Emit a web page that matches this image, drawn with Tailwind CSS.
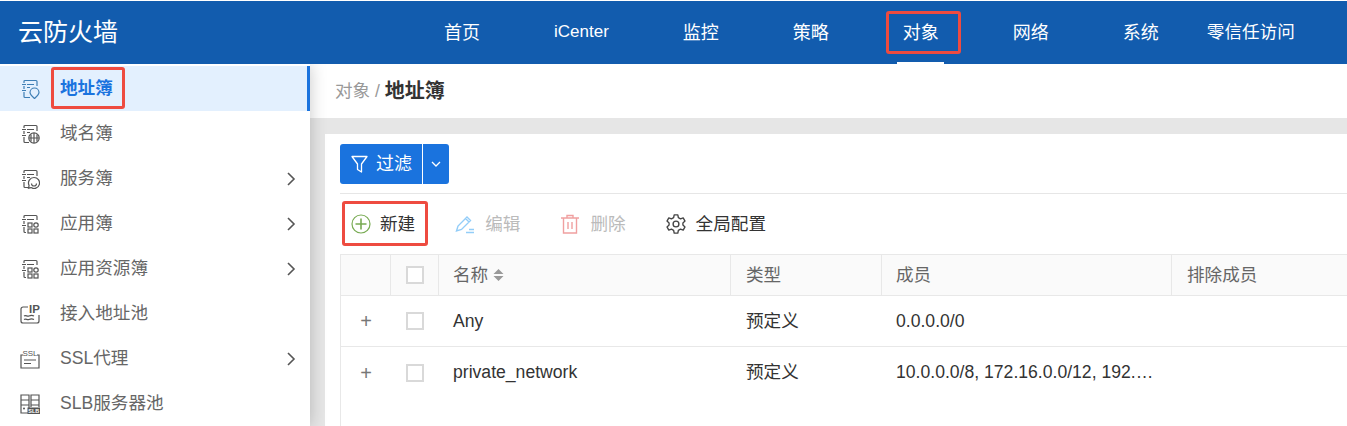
<!DOCTYPE html>
<html lang="zh">
<head>
    <meta charset="UTF-8">
    <title>云防火墙</title>
    <script src="https://cdn.jsdelivr.net/npm/@tailwindcss/browser@4"></script>
</head>
<body class="w-[1347px] h-[426px] overflow-hidden bg-white font-['Liberation_Sans','Noto_Sans_CJK_SC',sans-serif] text-[#333]">
    <!-- top bar -->
    <header class="relative z-20 mt-px h-[63px] bg-[#125cae] flex items-center text-white">
        <div class="w-[407px] pl-[18px] text-[25px] leading-none">云防火墙</div>
        <nav class="flex h-full text-lg">
            <a class="px-[37px] flex items-center">首页</a>
            <a class="px-[37px] flex items-center text-[17px]">iCenter</a>
            <a class="px-[37px] flex items-center">监控</a>
            <a class="px-[37px] flex items-center">策略</a>
            <a class="relative px-[37px] flex items-center">对象
                <span class="absolute left-[31px] bottom-0 w-[47px] h-[2px] bg-white"></span>
                <span class="absolute left-[20px] top-[10px] w-[75px] h-[43px] border-[3px] border-[#ee4b40] rounded-[3px]"></span>
            </a>
            <a class="px-[37px] flex items-center">网络</a>
            <a class="px-[37px] flex items-center">系统</a>
            <a class="px-[11px] flex items-center text-[17.6px]">零信任访问</a>
        </nav>
    </header>

    <div class="flex h-[362px]">
        <!-- sidebar -->
        <aside class="relative z-10 w-[310px] pt-[2px] shrink-0 text-[17.6px] text-[#666] bg-white shadow-[0_0_16px_rgba(0,0,0,0.22)]">
            <div class="relative h-[45px] flex items-center bg-[#e3f0fe] border-r-[3px] border-[#1a73de] text-[#1a73de] font-bold">
                <svg class="ml-[20px] w-5 h-5" viewBox="0 0 20 20" fill="none" stroke="#3f7fb5" stroke-width="1.200"><path d="M4 4V2.500a1 1 0 0 1 1-1h11a1 1 0 0 1 1 1V7M4 7v3M4 13v4.500a1 1 0 0 0 1 1h5M2 5.500h4M2 11.500h4M7 5.500h7M7 8.500h3"/><path d="M14.500 9a4.500 4.500 0 0 1 4.500 4.500c0 2-3 4.500-4.500 6-1.500-1.500-4.500-4-4.500-6A4.500 4.500 0 0 1 14.500 9z"/></svg>
                <span class="ml-[20px]">地址簿</span>
                <span class="absolute left-[51px] top-[1px] w-[74px] h-[42px] border-[3px] border-[#ee4b40] rounded-[3px]"></span>
            </div>
            <div class="h-[45px] flex items-center">
                <svg class="ml-[20px] w-5 h-5" viewBox="0 0 20 20" fill="none" stroke="#555" stroke-width="1.200"><path d="M4 4V2.500a1 1 0 0 1 1-1h11a1 1 0 0 1 1 1V7M4 7v3M4 13v4.500a1 1 0 0 0 1 1h4M2 5.500h4M2 11.500h4M7 5.500h7M7 8.500h3"/><circle cx="14" cy="14" r="5.200"/><path d="M9 14h10M14 9v10M11 10.500v7M17 10.500v7"/></svg>
                <span class="ml-[20px]">域名簿</span>
            </div>
            <div class="h-[45px] flex items-center">
                <svg class="ml-[20px] w-5 h-5" viewBox="0 0 20 20" fill="none" stroke="#555" stroke-width="1.200"><path d="M4 4V2.500a1 1 0 0 1 1-1h11a1 1 0 0 1 1 1V7M4 7v3M4 13v4.500a1 1 0 0 0 1 1h4M2 5.500h4M2 11.500h4M7 5.500h7M7 8.500h3"/><path d="M14 8.500a5.500 5.500 0 1 1-3 10.100l-2.500.6.600-2.700A5.500 5.500 0 0 1 14 8.500z"/><path d="M11.500 14.500a2.500 2.500 0 0 0 5 0"/></svg>
                <span class="ml-[20px]">服务簿</span>
                <svg class="ml-auto mr-[13px] w-3 h-3.5" viewBox="0 0 12 14" fill="none" stroke="#555" stroke-width="1.600"><path d="M3 1 9 7l-6 6"/></svg>
            </div>
            <div class="h-[45px] flex items-center">
                <svg class="ml-[20px] w-5 h-5" viewBox="0 0 20 20" fill="none" stroke="#555" stroke-width="1.200"><path d="M4 4V2.500a1 1 0 0 1 1-1h11a1 1 0 0 1 1 1V6M4 7v3M4 13v4.500a1 1 0 0 0 1 1h1M2 5.500h4M2 11.500h4M7 5.500h7"/><rect x="8" y="9" width="4" height="4"/><circle cx="16" cy="11" r="2.200"/><rect x="8" y="15" width="4" height="4"/><rect x="14" y="15" width="4" height="4"/></svg>
                <span class="ml-[20px]">应用簿</span>
                <svg class="ml-auto mr-[13px] w-3 h-3.5" viewBox="0 0 12 14" fill="none" stroke="#555" stroke-width="1.600"><path d="M3 1 9 7l-6 6"/></svg>
            </div>
            <div class="h-[45px] flex items-center">
                <svg class="ml-[20px] w-5 h-5" viewBox="0 0 20 20" fill="none" stroke="#555" stroke-width="1.200"><path d="M4 4V2.500a1 1 0 0 1 1-1h11a1 1 0 0 1 1 1V6M4 7v3M4 13v4.500a1 1 0 0 0 1 1h1M2 5.500h4M2 11.500h4M7 5.500h7"/><rect x="8" y="9" width="4" height="4"/><circle cx="16" cy="11" r="2.200"/><rect x="8" y="15" width="4" height="4"/><rect x="14" y="15" width="4" height="4"/></svg>
                <span class="ml-[20px]">应用资源簿</span>
                <svg class="ml-auto mr-[13px] w-3 h-3.5" viewBox="0 0 12 14" fill="none" stroke="#555" stroke-width="1.600"><path d="M3 1 9 7l-6 6"/></svg>
            </div>
            <div class="h-[45px] flex items-center">
                <svg class="ml-[20px] w-5 h-5" viewBox="0 0 20 20" fill="none" stroke="#555" stroke-width="1.200"><path d="M8 3H3a2 2 0 0 0-2 2v12a2 2 0 0 0 2 2h14a2 2 0 0 0 2-2v-6"/><path d="M4 12c2-1.500 3 1 5 0s3-1 5 0M4 15.500c2-1.500 3 1 5 0s3-1 5 0"/><text x="9" y="9" font-size="11.500" font-weight="700" fill="#555" stroke="none" font-family="Liberation Sans">IP</text></svg>
                <span class="ml-[20px]">接入地址池</span>
            </div>
            <div class="h-[45px] flex items-center">
                <svg class="ml-[20px] w-5 h-5" viewBox="0 0 20 20" fill="none" stroke="#555" stroke-width="1.200"><path d="M3 6H1v13h18V6h-2M4 11h12M4 14.500h7"/><text x="10" y="7" text-anchor="middle" font-size="8" fill="#555" stroke="none" font-family="Liberation Sans">SSL</text></svg>
                <span class="ml-[20px]">SSL代理</span>
                <svg class="ml-auto mr-[13px] w-3 h-3.5" viewBox="0 0 12 14" fill="none" stroke="#555" stroke-width="1.600"><path d="M3 1 9 7l-6 6"/></svg>
            </div>
            <div class="h-[45px] flex items-center">
                <svg class="ml-[20px] w-5 h-5" viewBox="0 0 20 20" fill="none" stroke="#555" stroke-width="1.200"><path d="M1 19V1h8v18H1zM1 6h8M1 11h8M11 13V1h8v12M11 6h8M11 11h8"/><circle cx="4" cy="14.500" r="1" fill="#555" stroke="none"/><rect x="7.500" y="13.500" width="12.500" height="6.500" fill="#555" stroke="none"/><text x="13.750" y="18.800" text-anchor="middle" font-size="5.500" font-weight="700" fill="#fff" stroke="none" font-family="Liberation Sans">SLB</text></svg>
                <span class="ml-[20px]">SLB服务器池</span>
            </div>
        </aside>

        <main class="flex-1 min-w-0 flex flex-col">
            <div class="h-[54px] shrink-0 pl-[25px] flex items-center text-[17.6px] text-[#999] bg-white">
                <span>对象 /&nbsp;</span><b class="font-bold text-[#333] text-[20px]">地址簿</b>
            </div>
            <div class="flex-1 flex flex-col bg-[#e6e6e6] pt-4 pl-[15px]">
                <div class="flex-1 bg-white pl-[15px] pt-[10px]">
                    <!-- filter -->
                    <div class="flex">
                        <button class="h-10 w-[82px] flex items-center bg-[#1a73de] rounded-l-[3px] text-white text-lg">
                            <svg class="ml-[11px] w-[17px] h-[18px]" viewBox="0 0 17 18" fill="none" stroke="white" stroke-width="1.300"><path d="M1 1.500h15l-5.500 7.500v8L6.500 14.500V9z" stroke-linejoin="round"/></svg>
                            <span class="ml-2">过滤</span>
                        </button>
                        <button class="ml-px h-10 w-[26px] flex items-center justify-center bg-[#1a73de] rounded-r-[3px]">
                            <svg class="w-3 h-2" viewBox="0 0 12 8" fill="none" stroke="white" stroke-width="1.300"><path d="M2 2l4 4 4-4"/></svg>
                        </button>
                    </div>
                    <div class="mt-[9px] border-t border-[#e6e6e6]"></div>
                    <!-- toolbar -->
                    <div class="relative h-[60px] flex items-center text-[17.6px]">
                        <svg class="ml-[11px] w-5 h-5" viewBox="0 0 20 20" fill="none" stroke="#78ab53"><circle cx="10" cy="10" r="9" stroke-width="1.200"/><path d="M10 4.500v11M4.500 10h11" stroke-width="1.600"/></svg>
                        <span class="ml-[9px]">新建</span>
                        <svg class="ml-[40px] w-[20px] h-5" viewBox="0 0 20 20" fill="none" stroke="#93cdf8" stroke-width="1.400"><path d="M1.500 17l1.500-5 9-9 3.500 3.500-9 9zM10.500 4.500 14 8M11 18.500h8M14 15.500h5"/></svg>
                        <span class="ml-[10px] text-[#bbb]">编辑</span>
                        <svg class="ml-[40px] w-5 h-5" viewBox="0 0 20 20" fill="none" stroke="#f0a0a0" stroke-width="1.400"><path d="M1 4h18M7 4V1.500h6V4M3.500 4v15h13V4M8 8v7M12 8v7"/></svg>
                        <span class="ml-[10px] text-[#bbb]">删除</span>
                        <svg class="ml-[40px] w-5 h-5" viewBox="1 1 22 22" fill="none" stroke="#444" stroke-width="1.500"><circle cx="12" cy="12" r="3.200"/><path d="M10 2h4l.6 3 2.400 1.300 2.900-1 2 3.500-2.300 2v2.400l2.300 2-2 3.500-2.900-1L14.600 19 14 22h-4l-.6-3L7 17.700l-2.900 1-2-3.500 2.300-2v-2.400l-2.300-2 2-3.500 2.900 1L9.400 5z" stroke-linejoin="round"/></svg>
                        <span class="ml-[10px]">全局配置</span>
                        <span class="absolute left-[2px] top-[7px] w-[86px] h-[45px] border-[3px] border-[#ee4b40] rounded-[3px]"></span>
                    </div>
                    <!-- table -->
                    <div class="text-[17.6px]">
                        <div class="h-[42px] flex items-center bg-[#fafafa] border border-r-0 border-[#e8e8e8] text-[#666]">
                            <div class="w-[50px] h-full border-r border-[#e8e8e8]"></div>
                            <div class="w-[48px] h-full border-r border-[#e8e8e8] flex items-center justify-center"><span class="w-[18px] h-[18px] bg-white border-2 border-[#d9d9d9]"></span></div>
                            <div class="w-[292px] h-full border-r border-[#e8e8e8] flex items-center pl-[14px]">名称
                                <svg class="ml-[5px] w-[11px] h-[14px]" viewBox="0 0 11 14" fill="#999"><path d="M5.500 1 10.500 6H.5zM5.500 13 .5 8h10z"/></svg>
                            </div>
                            <div class="w-[151px] h-full border-r border-[#e8e8e8] flex items-center pl-[15px]">类型</div>
                            <div class="w-[290px] h-full border-r border-[#e8e8e8] flex items-center pl-[14px]">成员</div>
                            <div class="flex-1 h-full flex items-center pl-[15px]">排除成员</div>
                        </div>
                        <div class="h-[51px] flex items-center border-l border-b border-[#e8e8e8]">
                            <div class="w-[50px] text-center text-[#777] text-xl">+</div>
                            <div class="w-[48px] flex justify-center"><span class="w-[18px] h-[18px] bg-white border-2 border-[#d9d9d9]"></span></div>
                            <div class="w-[292px] pl-[14px]">Any</div>
                            <div class="w-[151px] pl-[15px]">预定义</div>
                            <div class="w-[290px] pl-[14px]">0.0.0.0/0</div>
                        </div>
                        <div class="h-[51px] flex items-center border-l border-[#e8e8e8]">
                            <div class="w-[50px] text-center text-[#777] text-xl">+</div>
                            <div class="w-[48px] flex justify-center"><span class="w-[18px] h-[18px] bg-white border-2 border-[#d9d9d9]"></span></div>
                            <div class="w-[292px] pl-[14px]">private_network</div>
                            <div class="w-[151px] pl-[15px]">预定义</div>
                            <div class="w-[290px] pl-[14px] pr-[16px] truncate">10.0.0.0/8, 172.16.0.0/12, 192.168.0.0/16</div>
                        </div>
                        <div class="h-[29px] border-l border-[#e8e8e8]"></div>
                    </div>
                </div>
            </div>
        </main>
    </div>
</body>
</html>
